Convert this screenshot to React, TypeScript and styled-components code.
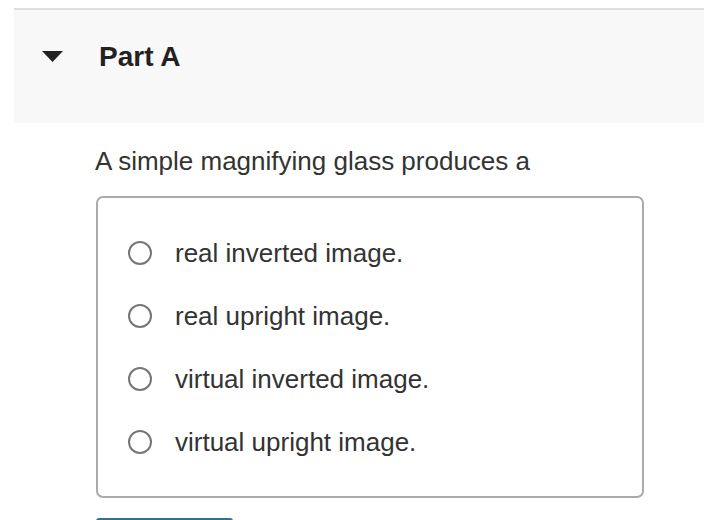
import React from 'react';
import styled, { createGlobalStyle } from 'styled-components';

const GlobalStyle = createGlobalStyle`
  html, body {
    margin: 0;
    padding: 0;
    background: #ffffff;
    font-family: 'Liberation Sans', Arial, sans-serif;
    color: #333333;
  }
`;

const Page = styled.div`
  padding-top: 8px;
  width: 704px;
  height: 520px;
  overflow: hidden;
  box-sizing: border-box;
`;

const PartHeader = styled.div`
  margin-left: 14px;
  height: 115px;
  border-top: 2px solid #dedede;
  background: #f8f8f8;
  display: flex;
  align-items: center;
  padding-left: 28px;
  padding-bottom: 20px;
  box-sizing: border-box;
`;

const Caret = styled.svg`
  width: 21px;
  height: 11px;
  margin-right: 36px;
`;

const PartTitle = styled.h2`
  margin: 0;
  font-size: 28px;
  font-weight: 700;
  color: #222222;
`;

const Body = styled.div`
  padding: 22px 0 0 95px;
`;

const Prompt = styled.p`
  margin: 0 0 19px 0;
  font-size: 26px;
  line-height: 32px;
  color: #333333;
`;

const Choices = styled.div`
  width: 548px;
  height: 302px;
  box-sizing: border-box;
  margin-left: 1px;
  border: 2px solid #aaaaaa;
  border-radius: 7px;
  padding: 39px 0 0 30px;
  display: flex;
  flex-direction: column;
  gap: 31px;
`;

const Option = styled.label`
  display: flex;
  align-items: center;
  gap: 23px;
  height: 32px;
  font-size: 26px;
  color: #333333;
  cursor: pointer;
`;

const Radio = styled.span`
  width: 24px;
  height: 24px;
  box-sizing: border-box;
  border: 2px solid #767676;
  border-radius: 50%;
  background: #ffffff;
  flex-shrink: 0;
`;

const SubmitButton = styled.button`
  margin: 20px 0 0 1px;
  width: 137px;
  height: 40px;
  border: none;
  border-radius: 3px;
  background: #2f7390;
`;

const options = [
  'real inverted image.',
  'real upright image.',
  'virtual inverted image.',
  'virtual upright image.',
];

export default function App() {
  return (
    <>
      <GlobalStyle />
      <Page>
        <PartHeader>
          <Caret viewBox="0 0 21 11">
            <path d="M0 0 H21 L10.5 11 Z" fill="#222222" />
          </Caret>
          <PartTitle>Part A</PartTitle>
        </PartHeader>
        <Body>
          <Prompt>A simple magnifying glass produces a</Prompt>
          <Choices>
            {options.map((o) => (
              <Option key={o}>
                <Radio />
                {o}
              </Option>
            ))}
          </Choices>
          <SubmitButton />
        </Body>
      </Page>
    </>
  );
}
